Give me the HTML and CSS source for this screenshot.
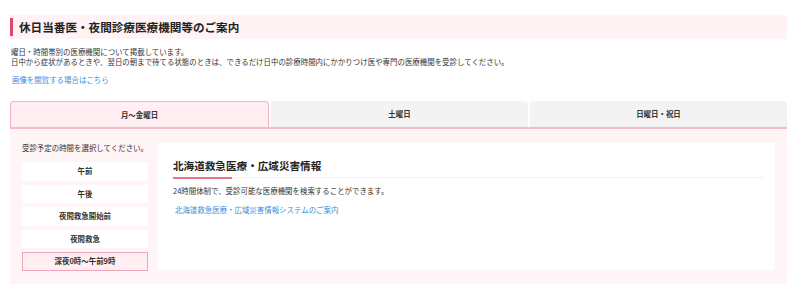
FILE: index.html
```html
<!DOCTYPE html>
<html lang="ja">
<head>
<meta charset="utf-8">
<link rel="stylesheet" href="styles.css">
</head>
<body>
<div class="wrap">
  <h1 class="page-title">休日当番医・夜間診療医療機関等のご案内</h1>
  <p class="lead">曜日・時間帯別の医療機関について掲載しています。<br>日中から症状があるときや、翌日の朝まで待てる状態のときは、できるだけ日中の診療時間内にかかりつけ医や専門の医療機関を受診してください。</p>
  <p class="img-link"><a href="#">画像を閲覧する場合はこちら</a></p>

  <div class="tabs">
    <div class="tab active">月〜金曜日</div>
    <div class="tab">土曜日</div>
    <div class="tab">日曜日・祝日</div>
  </div>
  <div class="panel">
    <div class="side">
      <p class="side-label">受診予定の時間を選択してください。</p>
      <div class="btn">午前</div>
      <div class="btn">午後</div>
      <div class="btn">夜間救急開始前</div>
      <div class="btn">夜間救急</div>
      <div class="btn current">深夜0時〜午前9時</div>
    </div>
    <div class="content">
      <h2 class="content-title">北海道救急医療・広域災害情報</h2>
      <p class="content-text">24時間体制で、受診可能な医療機関を検索することができます。</p>
      <p class="content-link"><a href="#">北海道救急医療・広域災害情報システムのご案内</a></p>
    </div>
  </div>
</div>
</body>
</html>
```
FILE: styles.css
```css
* { box-sizing: border-box; }
html, body { margin: 0; padding: 0; background: #fff; }
body {
  font-family: "Noto Sans CJK JP", "Noto Sans", sans-serif;
  color: #333;
  font-size: 7.45px;
}
.wrap { margin: 0 13px 0 10px; padding-top: 15px; }
.page-title {
  margin: 0;
  height: 24px;
  background: #fff3f5;
  font-size: 11.6px;
  font-weight: 700;
  line-height: 24px;
  padding-left: 9px;
  position: relative;
  color: #222;
}
.page-title::before {
  content: "";
  position: absolute;
  left: 0; top: 3px;
  width: 2.5px; height: 18px;
  background: #e2466f;
}
.lead {
  margin: 8px 0 0 1px;
  line-height: 10px;
}
.img-link { margin: 8px 0 0 2px; line-height: 10px; }
a { color: #3b8fdc; text-decoration: none; }
.tabs {
  display: flex;
  gap: 2px;
  margin-top: 16px;
  border-bottom: 2px solid #f4bccb;
}
.tab {
  flex: 1;
  height: 26px;
  line-height: 26px;
  text-align: center;
  background: #f3f3f3;
  border-radius: 4px 4px 0 0;
  font-weight: 700;
  color: #333;
}
.tab.active {
  background: #ffeef2;
  border: 1px solid #f2b2c3;
  border-bottom: none;
  line-height: 25px;
}
.panel {
  background: #fff4f6;
  display: flex;
  gap: 10px;
  padding: 14px 12px 14px 12px;
  height: 155px;
}
.side { width: 126px; }
.side-label { margin: 0 0 9px 0; line-height: 10px; }
.btn {
  height: 18.5px;
  line-height: 18.5px;
  background: #fff;
  text-align: center;
  font-weight: 700;
  margin-bottom: 4.1px;
}
.btn.current {
  background: #ffeef2;
  border: 1px solid #f0a6ba;
  line-height: 16.5px;
}
.content {
  flex: 1;
  background: #fff;
  padding: 13px 12px 0 15px;
}
.content-title {
  margin: 0;
  font-size: 10.6px;
  font-weight: 700;
  line-height: 20px;
  color: #222;
  border-bottom: 1px solid #fdecf0;
  position: relative;
  padding-bottom: 1px;
}
.content-title::after {
  content: "";
  position: absolute;
  left: 0; bottom: -1.5px;
  width: 59px; height: 2px;
  background: #e8718f;
}
.content-text { margin: 8px 0 0 0; line-height: 10px; }
.content-link { margin: 9px 0 0 2px; line-height: 10px; }
```
